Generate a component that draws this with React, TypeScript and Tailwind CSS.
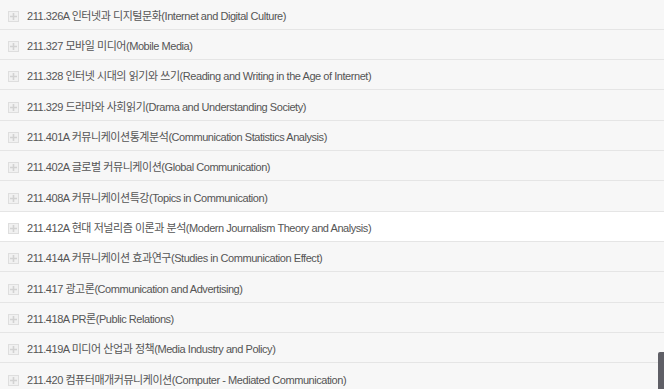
import React from "react";

const courses = [
  "211.326A 인터넷과 디지털문화(Internet and Digital Culture)",
  "211.327 모바일 미디어(Mobile Media)",
  "211.328 인터넷 시대의 읽기와 쓰기(Reading and Writing in the Age of Internet)",
  "211.329 드라마와 사회읽기(Drama and Understanding Society)",
  "211.401A 커뮤니케이션통계분석(Communication Statistics Analysis)",
  "211.402A 글로벌 커뮤니케이션(Global Communication)",
  "211.408A 커뮤니케이션특강(Topics in Communication)",
  "211.412A 현대 저널리즘 이론과 분석(Modern Journalism Theory and Analysis)",
  "211.414A 커뮤니케이션 효과연구(Studies in Communication Effect)",
  "211.417 광고론(Communication and Advertising)",
  "211.418A PR론(Public Relations)",
  "211.419A 미디어 산업과 정책(Media Industry and Policy)",
  "211.420 컴퓨터매개커뮤니케이션(Computer - Mediated Communication)",
];

const PlusBox = () => (
  <span className="flex h-[11px] w-[11px] shrink-0 items-center justify-center border border-[#dedede] bg-[#f1f1f1]">
    <svg width="9" height="9" viewBox="0 0 9 9">
      <path d="M4.5 1v7M1 4.5h7" stroke="#d2d2d2" strokeWidth="1.6" />
    </svg>
  </span>
);

const App = () => {
  return (
    <div className="relative h-[389px] w-[664px] overflow-hidden bg-[#f7f7f7] font-['Liberation_Sans','Noto_Sans_CJK_KR',sans-serif]">
      <ul className="-mt-[0.6px]">
        {courses.map((c, i) => (
          <li
            key={c}
            className={`flex h-[30.33px] items-center gap-[8px] border-b border-[#e5e5e5] pl-[8px] pt-[4px] text-[11px] tracking-[-0.45px] text-[#555] ${
              i === 7 ? "bg-white" : "bg-[#f7f7f7]"
            }`}
          >
            <PlusBox />
            <span>{c}</span>
          </li>
        ))}
      </ul>
      <div className="absolute left-[658px] top-[352px] h-[37px] w-[6px] rounded-tl-[2px] bg-[#5f5f66]" />
    </div>
  );
};

export default App;
